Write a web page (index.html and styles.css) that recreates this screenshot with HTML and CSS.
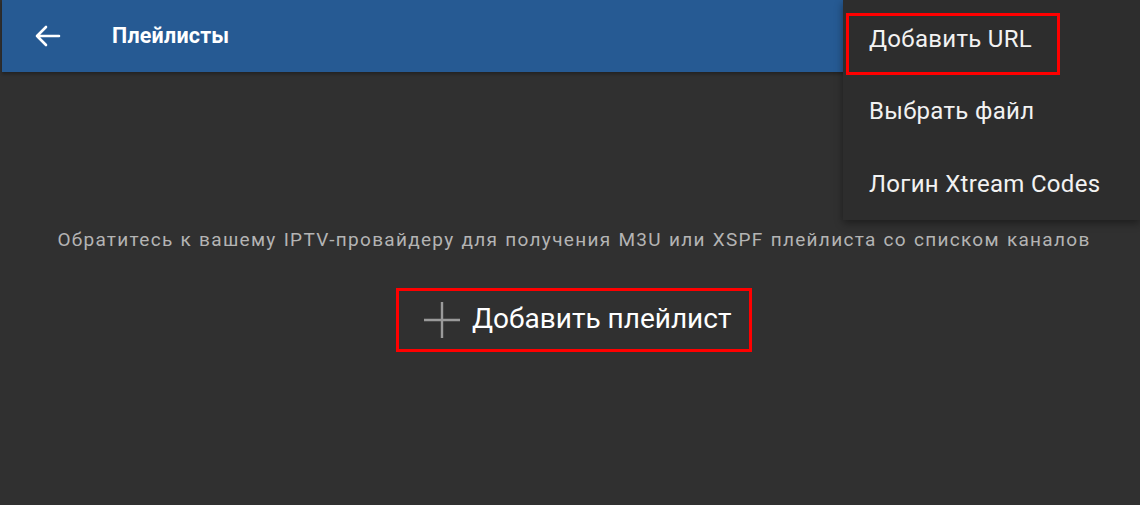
FILE: index.html
```html
<!DOCTYPE html>
<html lang="ru">
<head>
<meta charset="utf-8">
<link rel="stylesheet" href="styles.css">
</head>
<body>
<div class="app">
  <header class="bar">
    <svg class="back" width="28" height="24" viewBox="0 0 28 24"><path d="M26 12H4M13 3L4 12l9 9" fill="none" stroke="#fff" stroke-width="2.6" stroke-linecap="round" stroke-linejoin="round"/></svg>
    <span class="title">Плейлисты</span>
  </header>
  <main class="content">
    <p class="hint">Обратитесь к вашему IPTV-провайдеру для получения M3U или XSPF плейлиста со списком каналов</p>
    <div class="add">
      <svg width="38" height="38" viewBox="0 0 38 38"><path d="M19 1v36M1 19h36" stroke="#9a9a9a" stroke-width="2.4"/></svg>
      <span>Добавить плейлист</span>
    </div>
  </main>
  <ul class="menu">
    <li class="item focused">Добавить URL</li>
    <li class="item">Выбрать файл</li>
    <li class="item">Логин Xtream Codes</li>
  </ul>
</div>
</body>
</html>
```
FILE: styles.css
```css
* { box-sizing: border-box; }
html, body { margin: 0; padding: 0; }
body { background: #303030; font-family: Roboto, "Noto Sans", sans-serif; width: 1140px; height: 505px; overflow: hidden; }
.app { position: relative; width: 1140px; height: 505px; }
.bar {
  height: 72px; width: 843px; margin-left: 2px;
  background: #265a93; display: flex; align-items: center;
  box-shadow: 0 2px 3px rgba(0,0,0,0.3);
}
.back { margin-left: 31px; margin-top: -1px; }
.title { margin-left: 51px; color: #fff; font-size: 21.5px; font-weight: 700; margin-top: -1px; letter-spacing: 0.2px; }
.content { display: flex; flex-direction: column; align-items: center; }
.hint { margin: 157px 0 0 8px; color: #b4b4b4; font-size: 19px; line-height: 22px; letter-spacing: 1.3px; word-spacing: 1px; white-space: nowrap; }
.add {
  margin-top: 37px; margin-left: 8px; width: 356px; height: 64px;
  border: 3px solid #ff0000; display: flex; align-items: center;
  padding-left: 24px; gap: 11px; color: #fff; font-size: 28px;
}
.add span { margin-top: -3px; }
.menu {
  position: absolute; top: 0; left: 843px; width: 297px; height: 220px;
  margin: 0; padding: 0; list-style: none; background: #2d2d2d;
  box-shadow: 0 3px 8px rgba(0,0,0,0.4);
  display: flex; flex-direction: column; padding-top: 3px;
}
.item { height: 73px; display: flex; align-items: center; padding-left: 26px; color: #f2f2f2; font-size: 24px; letter-spacing: 0.3px; }
.item.focused { position: relative; }
.item.focused::after {
  content: ""; position: absolute; left: 3px; top: 10px; width: 208px; height: 56px;
  border: 3px solid #ff0000;
}
```
